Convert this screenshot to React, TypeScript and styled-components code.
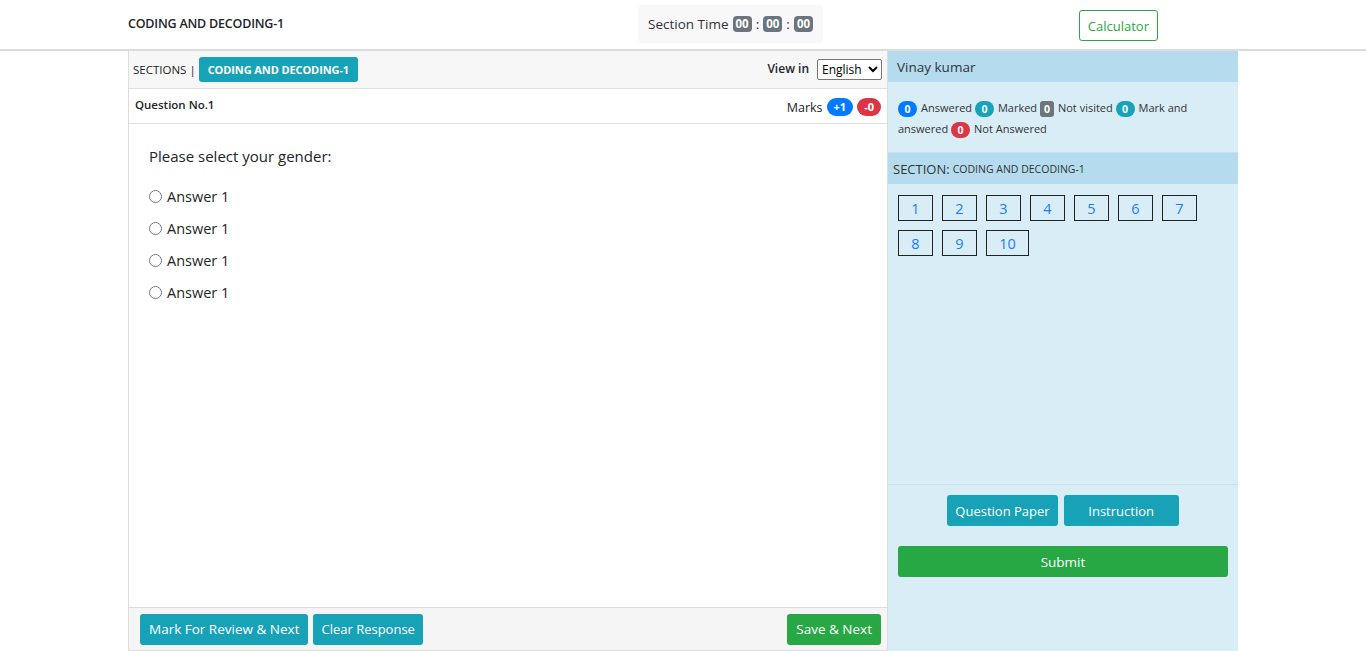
import React from "react";
import styled, { createGlobalStyle } from "styled-components";

const Global = createGlobalStyle`
  html, body { margin: 0; padding: 0; background: #fff; }
  body { font-family: "Open Sans", "Noto Sans", sans-serif; color: #212529; }
  * { box-sizing: border-box; }
`;

const Header = styled.header`
  height: 51px;
  border-bottom: 2px solid #dcdcdc;
  display: grid;
  grid-template-columns: 1110px;
  justify-content: center;
`;

const HeaderInner = styled.div`
  display: grid;
  grid-template-columns: 510px auto 1fr;
  align-items: center;
`;

const Title = styled.div`
  font-size: 12.5px;
  font-weight: 600;
  letter-spacing: -0.2px;
  padding-bottom: 2px;
`;

const TimeBox = styled.div`
  background: #f8f8fa;
  border-radius: 4px;
  height: 38px;
  margin-top: -1px;
  padding: 0 10px 0 10px;
  display: flex;
  align-items: center;
  gap: 4px;
  font-size: 13.5px;
  color: #333;
`;

const TimeBadge = styled.span`
  background: #6c757d;
  color: #fff;
  font-size: 11.5px;
  font-weight: 700;
  border-radius: 4px;
  padding: 1px 3px;
  line-height: 14px;
`;

const CalcWrap = styled.div`
  display: flex;
  justify-content: flex-end;
  padding-right: 80px;
`;

const OutlineButton = styled.button`
  font-family: inherit;
  background: #fff;
  color: #28a745;
  border: 1px solid #28a745;
  border-radius: 3px;
  font-size: 13px;
  height: 31px;
  padding: 0 8px;
  margin-top: 2px;
`;

const Main = styled.div`
  display: grid;
  grid-template-columns: 760px 350px;
  justify-content: center;
  height: 600px;
`;

const LeftCol = styled.div`
  display: flex;
  flex-direction: column;
  border-left: 1px solid #ddd;
  border-right: 1px solid #ddd;
  border-bottom: 1px solid #ddd;
`;

const SectionBar = styled.div`
  background: #f7f7f7;
  height: 37px;
  display: flex;
  align-items: center;
  padding: 0 5px 0 4px;
  font-size: 11.5px;
  font-weight: 500;
`;

const SectionLabel = styled.span`
  margin-right: 3px;
`;

const SectionTab = styled.span`
  background: #17a2b8;
  color: #fff;
  font-size: 11px;
  font-weight: 700;
  border-radius: 3px;
  height: 25px;
  display: inline-flex;
  align-items: center;
  padding: 0 9px;
  letter-spacing: -0.1px;
`;

const Spacer = styled.div`
  flex: 1;
`;

const ViewIn = styled.span`
  font-size: 12px;
  font-weight: 600;
  margin-right: 8px;
  margin-top: -3px;
`;

const Select = styled.select`
  font-family: inherit;
  font-size: 12px;
  height: 21px;
  width: 65px;
  border: 1px solid #767676;
  border-radius: 2px;
  background: #fff;
  color: #000;
  padding: 0;
`;

const QHead = styled.div`
  height: 36px;
  border-top: 1px solid #e0e0e0;
  border-bottom: 1px solid #e0e0e0;
  display: flex;
  align-items: flex-start;
  justify-content: space-between;
  padding: 7px 6px 0 6px;
`;

const QNo = styled.span`
  font-size: 11.5px;
  font-weight: 600;
  margin-top: 1px;
`;

const Marks = styled.span`
  display: flex;
  align-items: center;
  gap: 4px;
  font-size: 12.5px;
  margin-top: 2px;
`;

const Pill = styled.span<{ $bg: string }>`
  background: ${(p) => p.$bg};
  color: #fff;
  font-size: 11px;
  font-weight: 700;
  border-radius: 10px;
  padding: 0 7px;
  line-height: 18px;
`;

const QBody = styled.div`
  flex: 1;
  padding: 22px 20px;
`;

const QText = styled.div`
  font-size: 15px;
  margin-bottom: 14px;
`;

const Option = styled.label`
  display: flex;
  align-items: center;
  height: 32px;
  font-size: 14.5px;
  gap: 3px;
  input {
    margin: 0 2px 0 0;
    width: 13px;
    height: 13px;
  }
`;

const BottomBar = styled.div`
  height: 43px;
  background: #f5f5f5;
  border-top: 1px solid #ddd;
  display: flex;
  align-items: center;
  padding: 0 6px 0 11px;
  gap: 5px;
`;

const SolidButton = styled.button<{ $bg: string; $w?: string }>`
  font-family: inherit;
  background: ${(p) => p.$bg};
  color: #fff;
  border: none;
  border-radius: 3px;
  font-size: 13.5px;
  height: 31px;
  padding: 0 9px;
  ${(p) => (p.$w ? `width: ${p.$w};` : "")}
`;

const SmallButton = styled(SolidButton)`
  font-size: 13px;
  padding: 0 8px;
`;

const RightCol = styled.div`
  background: #d9edf7;
  display: flex;
  flex-direction: column;
`;

const PanelHead = styled.div`
  background: #b4dbee;
  height: 31px;
  display: flex;
  align-items: center;
  padding: 0 9px;
  font-size: 13.5px;
  color: #333;
`;

const Legend = styled.div`
  height: 71px;
  padding: 15px 10px 0 10px;
  font-size: 11px;
  line-height: 21px;
  color: #333;
  border-bottom: 1px solid #c9dfe9;
`;

const Dot = styled.span<{ $bg: string; $sq?: boolean }>`
  display: inline-block;
  background: ${(p) => p.$bg};
  color: #fff;
  font-weight: 700;
  font-size: 10.5px;
  line-height: 16px;
  height: 16px;
  min-width: ${(p) => (p.$sq ? "14px" : "19px")};
  text-align: center;
  border-radius: ${(p) => (p.$sq ? "3px" : "9px")};
  margin-right: 4px;
  vertical-align: middle;
`;

const SectionHead = styled(PanelHead)`
  padding: 0 5px;
  font-size: 13px;
  small {
    font-size: 10.5px;
    margin-left: 3px;
  }
`;

const Grid = styled.div`
  display: flex;
  flex-wrap: wrap;
  gap: 9px;
  padding: 11px 10px;
  align-content: flex-start;
  flex: 1;
  border-bottom: 1px solid #c9dfe9;
`;

const QBtn = styled.span<{ $wide?: boolean }>`
  width: ${(p) => (p.$wide ? "43px" : "35px")};
  height: 26px;
  border: 1px solid #222;
  color: #1a7df0;
  font-size: 14.5px;
  display: flex;
  align-items: center;
  justify-content: center;
`;

const Actions = styled.div`
  display: flex;
  justify-content: center;
  gap: 6px;
  padding-top: 10px;
`;

const SubmitRow = styled.div`
  padding: 20px 10px 74px 10px;
`;

const legend: { n: string; bg: string; sq?: boolean; label: string }[] = [
  { n: "0", bg: "#007bff", label: "Answered" },
  { n: "0", bg: "#17a2b8", label: "Marked" },
  { n: "0", bg: "#6c757d", sq: true, label: "Not visited" },
  { n: "0", bg: "#17a2b8", label: "Mark and answered" },
  { n: "0", bg: "#dc3545", label: "Not Answered" },
];

export default function App() {
  const nums = [1, 2, 3, 4, 5, 6, 7, 8, 9, 10];
  return (
    <>
      <Global />
      <Header>
        <HeaderInner>
          <Title>CODING AND DECODING-1</Title>
          <TimeBox>
            Section Time <TimeBadge>00</TimeBadge> : <TimeBadge>00</TimeBadge> : <TimeBadge>00</TimeBadge>
          </TimeBox>
          <CalcWrap>
            <OutlineButton>Calculator</OutlineButton>
          </CalcWrap>
        </HeaderInner>
      </Header>
      <Main>
        <LeftCol>
          <SectionBar>
            <SectionLabel>SECTIONS |</SectionLabel>
            <SectionTab>CODING AND DECODING-1</SectionTab>
            <Spacer />
            <ViewIn>View in</ViewIn>
            <Select defaultValue="English">
              <option>English</option>
            </Select>
          </SectionBar>
          <QHead>
            <QNo>Question No.1</QNo>
            <Marks>
              Marks <Pill $bg="#007bff">+1</Pill>
              <Pill $bg="#dc3545">-0</Pill>
            </Marks>
          </QHead>
          <QBody>
            <QText>Please select your gender:</QText>
            {[0, 1, 2, 3].map((i) => (
              <Option key={i}>
                <input type="radio" name="ans" />
                Answer 1
              </Option>
            ))}
          </QBody>
          <BottomBar>
            <SolidButton $bg="#17a2b8">Mark For Review &amp; Next</SolidButton>
            <SmallButton $bg="#17a2b8">Clear Response</SmallButton>
            <Spacer />
            <SolidButton $bg="#28a745">Save &amp; Next</SolidButton>
          </BottomBar>
        </LeftCol>
        <RightCol>
          <PanelHead>Vinay kumar</PanelHead>
          <Legend>
            {legend.map((l, i) => (
              <React.Fragment key={i}>
                <Dot $bg={l.bg} $sq={l.sq}>{l.n}</Dot>
                {l.label}{" "}
              </React.Fragment>
            ))}
          </Legend>
          <SectionHead>
            SECTION:<small>CODING AND DECODING-1</small>
          </SectionHead>
          <Grid>
            {nums.map((n) => (
              <QBtn key={n} $wide={n === 10}>
                {n}
              </QBtn>
            ))}
          </Grid>
          <Actions>
            <SmallButton $bg="#17a2b8">Question Paper</SmallButton>
            <SmallButton $bg="#17a2b8" $w="115px">Instruction</SmallButton>
          </Actions>
          <SubmitRow>
            <SolidButton $bg="#28a745" $w="100%">Submit</SolidButton>
          </SubmitRow>
        </RightCol>
      </Main>
    </>
  );
}
